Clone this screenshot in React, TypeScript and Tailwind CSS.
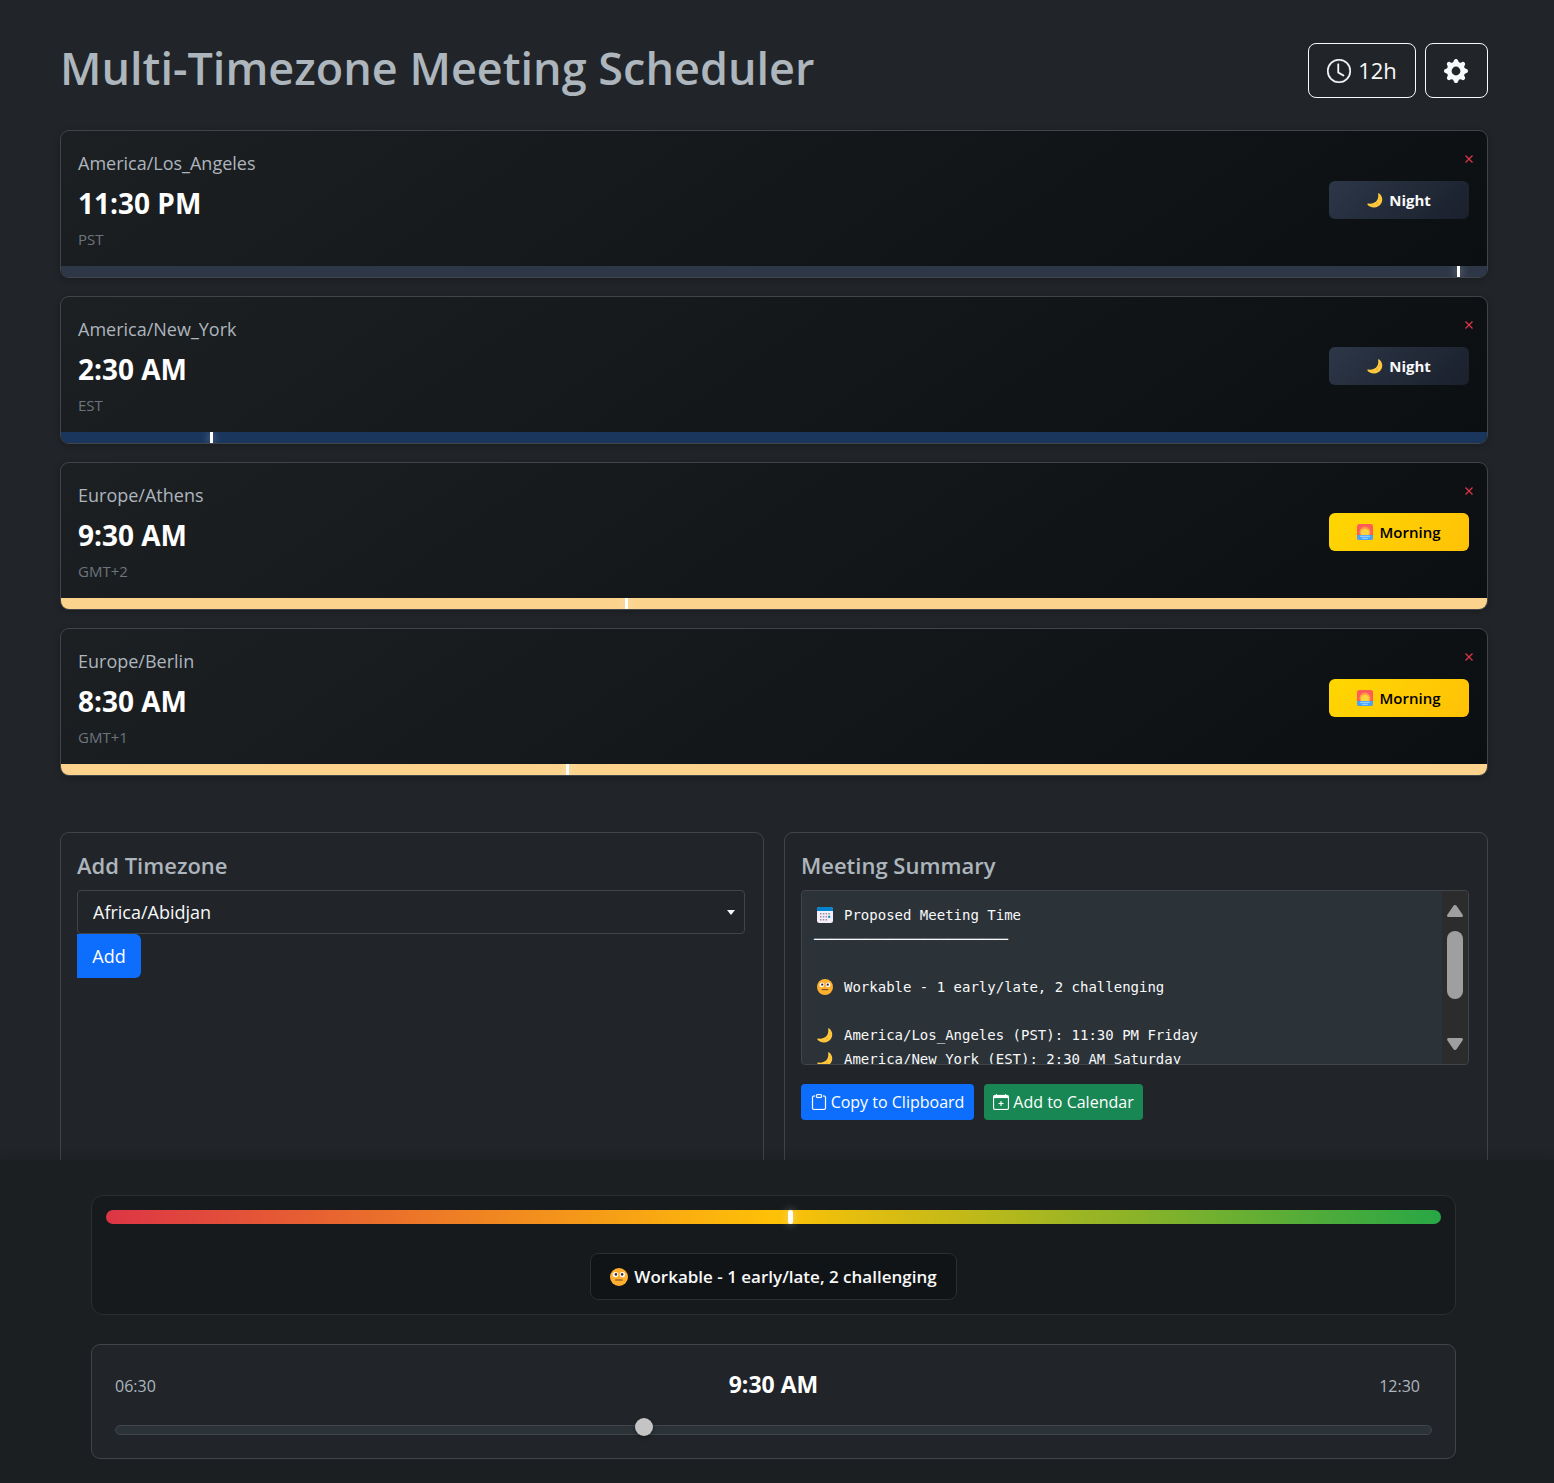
import { useState } from "react";
import { BsCalendarPlus, BsClipboard, BsClock, BsGearFill } from "react-icons/bs";

type Period = "night" | "morning";

type Zone = {
  name: string;
  time: string;
  abbr: string;
  period: Period;
  bar: string;
  marker: number;
};

const zones: Zone[] = [
  { name: "America/Los_Angeles", time: "11:30 PM", abbr: "PST", period: "night", bar: "bg-[#2d3748]", marker: 98 },
  { name: "America/New_York", time: "2:30 AM", abbr: "EST", period: "night", bar: "bg-[#1a365d]", marker: 10.5 },
  { name: "Europe/Athens", time: "9:30 AM", abbr: "GMT+2", period: "morning", bar: "bg-[#fbd38d]", marker: 39.6 },
  { name: "Europe/Berlin", time: "8:30 AM", abbr: "GMT+1", period: "morning", bar: "bg-[#fbd38d]", marker: 35.5 },
];

function MoonIcon({ className }: { className: string }) {
  return (
    <svg viewBox="0 0 16 16" className={className} aria-hidden="true">
      <path d="M11.900 1.300c3.100 2 4.300 6.200 2.500 9.700C12.300 15.200 7.200 16.700 3 14.600 1.900 14.100 1 13.300.4 12.400c-.3-.5.1-.9.6-.8 3.600.6 7.300-.7 9.200-3.700 1.100-1.700 1.300-3.800.9-5.900-.1-.6.300-1 .8-.7z" fill="#ffc83d" />
      <circle cx="12.800" cy="7.500" r=".8" fill="#f0b232" />
      <circle cx="10.200" cy="11.500" r="1" fill="#f0b232" />
      <circle cx="6" cy="13.300" r=".7" fill="#f0b232" />
    </svg>
  );
}

function SunriseIcon({ className }: { className: string }) {
  return (
    <svg viewBox="0 0 16 16" className={className} aria-hidden="true">
      <rect width="16" height="16" rx="2.500" fill="#ff5b5b" />
      <path d="M0 11h16v2.500a2.500 2.500 0 0 1-2.500 2.500h-11A2.500 2.500 0 0 1 0 13.500z" fill="#46a4fb" />
      <path d="M8 2.300l1.400 1 1.700-.1.700 1.500 1.400.9-.1 1.700.8 1.500-.9 1.200-.5 1H3.500L3 10l-.9-1.200.8-1.500-.1-1.700 1.400-.9.700-1.500 1.700.1z" fill="#ff9f3e" />
      <path d="M4.300 11a4.200 4.200 0 1 1 7.400 0z" fill="#ffd23f" />
      <path d="M3.500 12.300h9M5.500 14.300h5" stroke="#bfe2ff" strokeWidth=".8" strokeLinecap="round" />
    </svg>
  );
}

function FaceIcon({ className }: { className: string }) {
  return (
    <svg viewBox="0 0 18 18" className={className} aria-hidden="true">
      <circle cx="9" cy="9" r="9" fill="#ffb02e" />
      <circle cx="5.500" cy="6.600" r="2.700" fill="#fff" />
      <circle cx="12.500" cy="6.600" r="2.700" fill="#fff" />
      <circle cx="5.900" cy="6.400" r="1.300" fill="#402a32" />
      <circle cx="12.100" cy="6.400" r="1.300" fill="#402a32" />
      <path d="M5.700 12h6.600" stroke="#6b4423" strokeWidth="1.100" strokeLinecap="round" />
    </svg>
  );
}

function CalendarEmoji({ className }: { className: string }) {
  return (
    <svg viewBox="0 0 16 16" className={className} aria-hidden="true">
      <rect width="16" height="16" rx="2.500" fill="#f3eef8" />
      <path d="M0 4V2.500A2.500 2.500 0 0 1 2.500 0h11A2.500 2.500 0 0 1 16 2.500V4z" fill="#0084ce" />
      <g fill="#998ea4">
        <rect x="3" y="6" width="1.500" height="1.500" />
        <rect x="5.800" y="6" width="1.500" height="1.500" />
        <rect x="8.600" y="6" width="1.500" height="1.500" />
        <rect x="11.400" y="6" width="1.500" height="1.500" />
        <rect x="3" y="9" width="1.500" height="1.500" />
        <rect x="5.800" y="9" width="1.500" height="1.500" />
        <rect x="8.600" y="9" width="1.500" height="1.500" />
        <rect x="3" y="12" width="1.500" height="1.500" />
        <rect x="5.800" y="12" width="1.500" height="1.500" />
        <rect x="8.600" y="12" width="1.500" height="1.500" />
      </g>
      <rect x="11.200" y="8.800" width="2" height="2" fill="#0084ce" />
    </svg>
  );
}

function PeriodBadge({ period }: { period: Period }) {
  if (period === "night") {
    return (
      <div className="flex h-[38px] w-[140px] items-center justify-center gap-1.5 rounded-md bg-linear-135 from-[#2d3748] to-[#1a202c] text-[15px] font-bold text-[#f8f9fa]">
        <MoonIcon className="size-4" />
        Night
      </div>
    );
  }
  return (
    <div className="flex h-[38px] w-[140px] items-center justify-center gap-1.5 rounded-md bg-linear-135 from-[#ffd700] to-[#ffc107] text-[15px] font-semibold text-black">
      <SunriseIcon className="size-4" />
      Morning
    </div>
  );
}

function ZoneCard({ zone }: { zone: Zone }) {
  return (
    <article className="overflow-hidden rounded-[9px] border border-[#414448] bg-linear-145 from-[#1c2023] to-[#0b0f12] shadow-[0_2px_6px_rgba(0,0,0,0.25)]">
      <div className="flex h-[135px] justify-between pt-[18px] pl-[17px]">
        <div>
          <h2 className="text-lg leading-7 text-[#adb5bd]">{zone.name}</h2>
          <p className="mt-2 text-[28px] leading-9 font-bold text-white">{zone.time}</p>
          <p className="mt-2 text-[15px] leading-5 text-[#6c757d]">{zone.abbr}</p>
        </div>
        <div className="flex flex-col items-end pt-1">
          <button type="button" aria-label={`Remove ${zone.name}`} className="mr-3 flex h-3 w-3 items-center justify-center text-[#dc3545]">
            <svg viewBox="0 0 8 8" className="size-2" fill="none" stroke="currentColor" strokeWidth="1.300" aria-hidden="true">
              <path d="M.5.5l7 7M7.500.5l-7 7" />
            </svg>
          </button>
          <div className="mt-4 mr-[18px]">
            <PeriodBadge period={zone.period} />
          </div>
        </div>
      </div>
      <div className={`relative h-[11px] overflow-hidden ${zone.bar}`}>
        <span
          className="absolute inset-y-0 -ml-px w-[3px] bg-white shadow-[0_0_9px_rgba(255,255,255,0.5)]"
          style={{ left: `${zone.marker}%` }}
        />
      </div>
    </article>
  );
}

function SummaryLine({ icon, children }: { icon?: React.ReactNode; children?: React.ReactNode }) {
  return (
    <div className="flex h-6 items-center">
      {icon && <span className="mr-[11px] ml-[3px] flex">{icon}</span>}
      {children}
    </div>
  );
}

export default function App() {
  const [offset, setOffset] = useState(40);

  return (
    <div className="flex h-screen flex-col bg-[#212529] font-['Open_Sans','Noto_Sans',sans-serif]">
      <main className="min-h-0 flex-1 overflow-y-auto pt-[43px] pr-[66px] pl-[60px] [scrollbar-width:none]">
        <header className="flex items-start justify-between">
          <h1 className="text-[45px] leading-[50px] font-semibold text-[#adb5bd]">Multi-Timezone Meeting Scheduler</h1>
          <div className="flex gap-[9px]">
            <button type="button" className="flex h-[55px] w-[108px] items-center justify-center gap-[7px] rounded-lg border border-[#f8f9fa] text-[22px] text-[#f8f9fa]">
              <BsClock className="size-6" strokeWidth="0.2" />
              12h
            </button>
            <button type="button" aria-label="Settings" className="flex h-[55px] w-[63px] items-center justify-center rounded-lg border border-[#f8f9fa] pr-px text-[#f8f9fa]">
              <BsGearFill className="size-6" />
            </button>
          </div>
        </header>

        <section className="mt-8 flex flex-col gap-[18px]">
          {zones.map((zone) => (
            <ZoneCard key={zone.name} zone={zone} />
          ))}
        </section>

        <div className="mt-14 grid grid-cols-2 gap-5">
          <section className="min-h-[380px] rounded-[9px] border border-[#414448] pt-4 pr-[18px] pl-4">
            <h2 className="text-[22px] leading-8 font-semibold text-[#adb5bd]">
              <label htmlFor="zone">Add Timezone</label>
            </h2>
            <div className="relative mt-[9px]">
              <select id="zone" className="h-11 w-full appearance-none rounded border border-[#414448] bg-[#212529] px-[15px] text-lg text-[#f8f9fa]">
                <option>Africa/Abidjan</option>
                <option>Africa/Accra</option>
                <option>Africa/Cairo</option>
              </select>
              <svg viewBox="0 0 8 5" className="pointer-events-none absolute top-5 right-[10px] h-[5px] w-2" fill="#f8f9fa" aria-hidden="true">
                <path d="M0 0h8L4 5z" />
              </svg>
            </div>
            <button type="button" className="block h-11 w-16 rounded-r-md bg-[#0d6efd] text-lg text-white">Add</button>
          </section>

          <section className="min-h-[380px] rounded-[9px] border border-[#414448] pt-4 pr-[18px] pl-4">
            <h2 className="text-[22px] leading-8 font-semibold text-[#adb5bd]">Meeting Summary</h2>
            <div className="mt-[9px] flex h-[175px] overflow-hidden rounded border border-[#414448] bg-[#2b3238]">
              <div className="min-w-0 flex-1 overflow-hidden pt-3 pl-3 font-['DejaVu_Sans_Mono','Liberation_Mono',monospace] text-sm whitespace-pre text-[#f8f9fa]">
                <SummaryLine icon={<CalendarEmoji className="size-4" />}>Proposed Meeting Time</SummaryLine>
                <SummaryLine>───────────────────────</SummaryLine>
                <SummaryLine />
                <SummaryLine icon={<FaceIcon className="size-4" />}>Workable - 1 early/late, 2 challenging</SummaryLine>
                <SummaryLine />
                <SummaryLine icon={<MoonIcon className="size-4" />}>America/Los_Angeles (PST): 11:30 PM Friday</SummaryLine>
                <SummaryLine icon={<MoonIcon className="size-4" />}>America/New_York (EST): 2:30 AM Saturday</SummaryLine>
              </div>
              <div className="flex w-[26px] flex-col items-center bg-[#2c2c2c] py-[14px]" aria-hidden="true">
                <svg viewBox="0 0 16 12" className="h-3 w-4" fill="#9f9f9f">
                  <path d="M6.500.8a2 2 0 0 1 3 0l6 8.700c.8 1.200.3 2.500-1 2.500h-13c-1.300 0-1.800-1.300-1-2.500z" />
                </svg>
                <div className="mt-[14px] h-[68px] w-4 rounded-full bg-[#9f9f9f]" />
                <svg viewBox="0 0 16 12" className="mt-auto h-3 w-4 rotate-180" fill="#9f9f9f">
                  <path d="M6.500.8a2 2 0 0 1 3 0l6 8.700c.8 1.200.3 2.500-1 2.500h-13c-1.300 0-1.800-1.300-1-2.500z" />
                </svg>
              </div>
            </div>
            <div className="mt-[19px] flex gap-[10px]">
              <button type="button" className="flex h-9 w-[173px] items-center justify-center gap-1 rounded bg-[#0d6efd] text-base whitespace-nowrap text-white">
                <BsClipboard className="size-4 shrink-0" strokeWidth="0.2" />
                Copy to Clipboard
              </button>
              <button type="button" className="flex h-9 w-[159px] items-center justify-center gap-1 rounded bg-[#198754] text-base whitespace-nowrap text-white">
                <BsCalendarPlus className="size-4 shrink-0" strokeWidth="0.2" />
                Add to Calendar
              </button>
            </div>
          </section>
        </div>
      </main>

      <footer className="z-10 bg-[#1b1f22] pt-[35px] pr-[98px] pb-6 pl-[91px] shadow-[0_-2px_9px_rgba(0,0,0,0.15)]">
        <section className="rounded-xl border border-[#2b2f32] bg-[#171a1d] p-[14px]">
          <div className="relative h-[14px] rounded-full bg-linear-to-r/srgb from-[#dc3545] via-[#ffc107] to-[#28a745]">
            <span className="absolute inset-y-0 left-[51%] ml-px w-[5px] rounded-sm bg-white shadow-[0_0_9px_rgba(255,255,255,0.5)]" />
          </div>
          <div className="mx-auto mt-[29px] flex h-[47px] w-[367px] items-center justify-center gap-1.5 rounded-lg border border-[#2b2f32] bg-[#111416] text-[17px] font-semibold text-[#f8f9fa]">
            <FaceIcon className="size-[18px]" />
            <span>Workable - 1 early/late, 2 challenging</span>
          </div>
        </section>

        <section className="mt-[29px] rounded-[9px] border border-[#414448] bg-[#212529] px-[23px] pt-[23px] pb-[23px]">
          <div className="grid grid-cols-3 items-center pr-3">
            <span className="pt-1 text-base text-[#adb5bd]">06:30</span>
            <label htmlFor="time" className="pl-3 text-center text-[23px] leading-8 font-bold text-white">9:30 AM</label>
            <span className="pt-1 text-right text-base text-[#adb5bd]">12:30</span>
          </div>
          <input
            id="time"
            type="range"
            min={0}
            max={100}
            value={offset}
            onChange={(e) => setOffset(Number(e.target.value))}
            className="mt-[25px] block h-[10px] w-full appearance-none rounded-full border border-[#414448] bg-[#2b3238] [&::-webkit-slider-runnable-track]:h-2 [&::-webkit-slider-thumb]:-mt-2 [&::-webkit-slider-thumb]:size-[18px] [&::-webkit-slider-thumb]:appearance-none [&::-webkit-slider-thumb]:rounded-full [&::-webkit-slider-thumb]:bg-[#c4c4c4] [&::-webkit-slider-thumb]:shadow-[0_2px_4px_rgba(0,0,0,0.3)]"
          />
        </section>
      </footer>
    </div>
  );
}
